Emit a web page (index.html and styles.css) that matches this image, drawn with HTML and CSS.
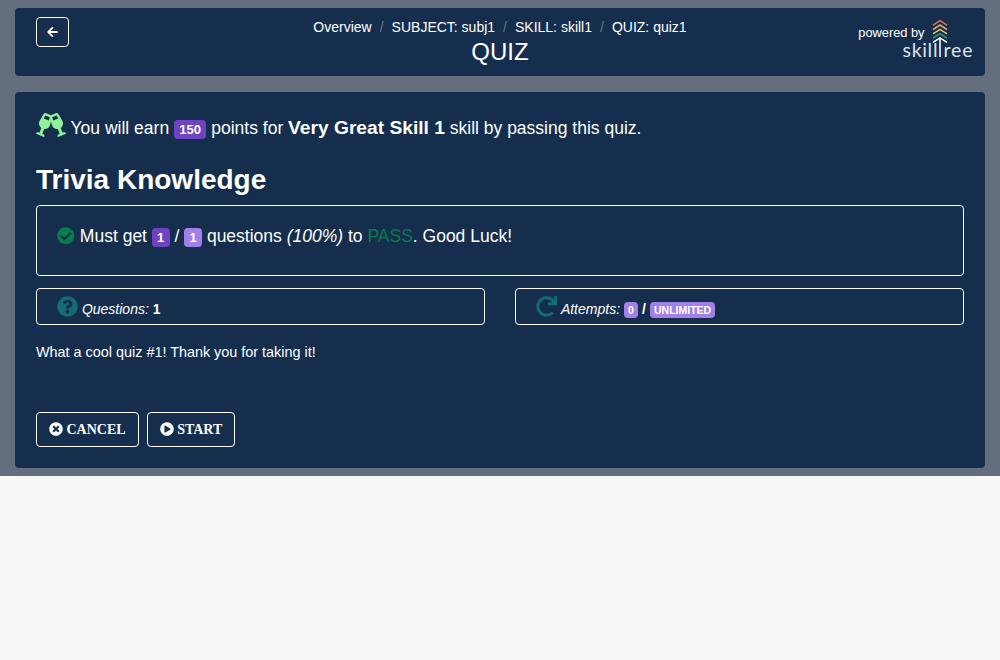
FILE: index.html
```html
<!DOCTYPE html>
<html lang="en">
<head>
<meta charset="utf-8">
<title>Quiz</title>
<link rel="stylesheet" href="styles.css">
</head>
<body>
<div class="page">
  <header class="card header">
    <div class="side">
      <button class="btn back" aria-label="Back"><svg width="11" height="12" viewBox="0 0 448 512"><path d="M257.500 445.100l-22.200 22.200c-9.400 9.400-24.600 9.400-33.900 0L7 273c-9.400-9.400-9.400-24.600 0-33.900L201.400 44.700c9.400-9.400 24.600-9.400 33.900 0l22.200 22.200c9.500 9.500 9.300 25-.4 34.300L136.600 216H424c13.300 0 24 10.700 24 24v32c0 13.300-10.700 24-24 24H136.600l120.500 114.800c9.800 9.300 10 24.800.4 34.300z"/></svg></button>
    </div>
    <div class="center">
      <nav class="crumbs"><a>Overview</a><i>/</i><a>SUBJECT: subj1</a><i>/</i><a>SKILL: skill1</a><i>/</i><a>QUIZ: quiz1</a></nav>
      <h1 class="title">QUIZ</h1>
    </div>
    <div class="side brand">
      <span class="powered">powered by</span>
      <svg class="logo" width="72" height="42" viewBox="0 0 72 42">
        <g fill="none" stroke-width="1.5">
          <path stroke="#e07256" d="M31 7.200l7-4.500 7 4.500"/>
          <path stroke="#eda05f" d="M31 11.500l7-4.500 7 4.500"/>
          <path stroke="#e5c15e" d="M31 15.800l7-4.500 7 4.500"/>
          <path stroke="#2a9d8c" d="M31 20.100l7-4.500 7 4.500"/>
          <path stroke="#fff" d="M31 24.400l7-4.500 7 4.500M38 20v19"/>
        </g>
        <text class="logo-text" x="0.500" y="39" textLength="35">skill</text>
        <text class="logo-text" x="41.500" y="39" textLength="29">ree</text>
      </svg>
    </div>
  </header>

  <main class="card main">
    <p class="earn"><svg class="cheers" width="30" height="24" viewBox="0 0 640 512"><path d="M639.400 433.600c-8.400-20.400-31.800-30.100-52.200-21.600l-22.100 9.200-38.700-101.900c47.900-35 64.800-100.300 34.500-152.800L474.300 16c-8-13.900-25.100-19.700-40-13.600L320 49.800 205.700 2.400c-14.900-6.200-32-.3-40 13.600L79.100 166.500C48.900 219 65.700 284.300 113.600 319.200L74.900 421.100l-22.100-9.200c-20.400-8.500-43.700 1.200-52.200 21.600-1.700 4.100.2 8.800 4.300 10.500l162.300 67.400c4.100 1.700 8.700-.2 10.400-4.300 8.400-20.400-1.200-43.800-21.600-52.300l-22.100-9.200L173.300 342c4.400.5 8.800 1.300 13.100 1.300 51.700 0 99.400-33.100 113.400-85.300l20.200-75.400 20.200 75.400c14 52.200 61.700 85.300 113.400 85.300 4.300 0 8.700-.8 13.100-1.300L506 445.600l-22.100 9.200c-20.400 8.500-30 31.900-21.600 52.300 1.700 4.100 6.400 6 10.400 4.300L635.100 444c4-1.700 6-6.300 4.300-10.400zM275.900 162.100l-112.100-46.500 36.500-63.400 94.500 39.200-18.900 70.700zm88.200 0l-18.900-70.700 94.500-39.200 36.500 63.400-112.100 46.500z"/></svg>
      You will earn <span class="badge dark">150</span> points for <b>Very Great Skill 1</b> skill by passing this quiz.</p>
    <h2 class="name">Trivia Knowledge</h2>
    <section class="box goal"><svg class="check" width="17.500" height="17.500" viewBox="0 0 512 512"><path d="M504 256c0 136.967-111.033 248-248 248S8 392.967 8 256 119.033 8 256 8s248 111.033 248 248zM227.314 387.314l184-184c6.248-6.248 6.248-16.379 0-22.627l-22.627-22.627c-6.248-6.249-16.379-6.249-22.628 0L216 308.118l-70.059-70.059c-6.248-6.248-16.379-6.248-22.628 0l-22.627 22.627c-6.248 6.248-6.248 16.379 0 22.627l104 104c6.249 6.249 16.379 6.249 22.628.001z"/></svg>
      Must get <span class="badge dark">1</span> / <span class="badge light">1</span> questions <em>(100%)</em> to <span class="pass">PASS</span>. Good Luck!</section>
    <div class="stats">
      <section class="box stat"><svg class="stat-icon" width="21" height="21" viewBox="0 0 512 512"><path d="M504 256c0 136.997-111.043 248-248 248S8 392.997 8 256C8 119.083 119.043 8 256 8s248 111.083 248 248zM262.655 90c-54.497 0-89.255 22.957-116.549 63.758-3.536 5.286-2.353 12.415 2.715 16.258l34.699 26.310c5.205 3.947 12.621 3.008 16.665-2.122 17.864-22.658 30.113-35.797 57.303-35.797 20.429 0 45.698 13.148 45.698 32.958 0 14.976-12.363 22.667-32.534 33.976C247.128 238.528 216 254.941 216 296v4c0 6.627 5.373 12 12 12h56c6.627 0 12-5.373 12-12v-1.333c0-28.462 83.186-29.647 83.186-106.667 0-58.002-60.165-102-116.531-102zM256 338c-25.365 0-46 20.635-46 46 0 25.364 20.635 46 46 46s46-20.636 46-46c0-25.365-20.635-46-46-46z"/></svg>
        <em>Questions:</em> <b>1</b></section>
      <section class="box stat"><svg class="stat-icon" width="21" height="21" viewBox="0 0 512 512"><path d="M500.330 0h-47.410a12 12 0 0 0-12 12.570l4 82.760A247.420 247.420 0 0 0 256 8C119.340 8 7.900 119.530 8 256.190 8.100 393.070 119.100 504 256 504a247.100 247.100 0 0 0 166.180-63.910 12 12 0 0 0 .48-17.430l-34-34a12 12 0 0 0-16.380-.55A176 176 0 1 1 402.100 157.800l-101.530-4.870a12 12 0 0 0-12.570 12v47.410a12 12 0 0 0 12 12h200.330a12 12 0 0 0 12-12V12a12 12 0 0 0-12-12z"/></svg>
        <em>Attempts:</em> <b><span class="badge light small">0</span> / <span class="badge light small">UNLIMITED</span></b></section>
    </div>
    <p class="desc">What a cool quiz #1! Thank you for taking it!</p>
    <div class="actions">
      <button class="btn action"><svg width="14" height="14" viewBox="0 0 512 512"><path d="M256 8C119 8 8 119 8 256s111 248 248 248 248-111 248-248S393 8 256 8zm121.600 313.100c4.700 4.700 4.700 12.300 0 17L338 377.600c-4.700 4.700-12.300 4.700-17 0L256 312l-65.100 65.600c-4.700 4.700-12.300 4.700-17 0L134.400 338c-4.700-4.700-4.700-12.300 0-17l65.600-65-65.600-65.100c-4.700-4.700-4.700-12.300 0-17l39.600-39.600c4.700-4.700 12.300-4.700 17 0l65 65.700 65.100-65.600c4.700-4.700 12.300-4.700 17 0l39.600 39.600c4.700 4.700 4.700 12.300 0 17L312 256l65.600 65.100z"/></svg><span>CANCEL</span></button>
      <button class="btn action"><svg width="14" height="14" viewBox="0 0 512 512"><path d="M256 8C119 8 8 119 8 256s111 248 248 248 248-111 248-248S393 8 256 8zm115.700 272l-176 101c-15.800 8.800-35.700-2.500-35.700-21V152c0-18.400 19.800-29.800 35.700-21l176 107c16.400 9.200 16.400 32.900 0 42z"/></svg><span>START</span></button>
    </div>
  </main>
</div>
</body>
</html>
```
FILE: styles.css
```css
* { box-sizing: border-box; }
body { margin: 0; background: #f7f7f7; color: #fff; font: 14.4px/21.6px "Liberation Sans", Arial, sans-serif; }
svg { fill: currentColor; }
.page { height: 476px; padding: 8px 15px; background: #646d7d; display: flex; flex-direction: column; gap: 16px; }
.card { background: #152e4d; border-radius: 4px; }
.header { height: 68px; display: grid; grid-template-columns: 1fr auto 1fr; padding: 9px 11px 0 21px; }
.center { text-align: center; padding-right: 10px; }
.crumbs { display: flex; font-size: 14px; line-height: 20px; }
.crumbs i { font-style: normal; color: #6c757d; padding: 0 8px; }
.title { margin: 0; font-size: 24px; line-height: 30px; font-weight: 400; }
.btn { background: transparent; border: 1px solid #fff; border-radius: 4px; color: #fff; padding: 0; display: flex; align-items: center; justify-content: center; }
.back { width: 33px; height: 30px; }
.brand { display: flex; justify-content: flex-end; align-items: flex-start; }
.powered { font-size: 12.800px; line-height: 20px; padding-top: 6px; margin-right: -22.500px; }
.logo { margin-top: 1px; }
.logo-text { font: 400 19.500px Lato, sans-serif; fill: #dde2e8; }
.main { height: 376px; padding: 19px 21px 21px; display: flex; flex-direction: column; }
.earn { margin: 0; font-size: 17.500px; line-height: 34px; height: 52px; }
.earn b { font-size: 19.200px; }
.cheers { fill: #90f297; vertical-align: -3px; }
.badge { display: inline-block; font-size: 13.125px; font-weight: 700; line-height: 13.125px; padding: 3.280px 5.250px; border-radius: 4px; }
.dark { background: #6f42c1; }
.light { background: #a37fe8; }
.small { font-size: 10.500px; line-height: 10.500px; padding: 2.600px 4.200px; }
.name { margin: 0; font-size: 28px; line-height: 34px; height: 42px; }
.box { border: 1px solid #fff; border-radius: 4px; }
.goal { height: 71px; padding: 17px 20px; font-size: 17.500px; line-height: 26px; }
.check { color: #047f49; vertical-align: -2px; margin-right: 0.500px; }
.pass { color: #047f49; }
.stats { display: grid; grid-template-columns: 1fr 1fr; gap: 30px; margin-top: 12px; }
.stat { height: 37px; padding: 6px 20px 0; font-size: 14px; line-height: 28px; }
.stat-icon { color: #146c75; vertical-align: -3px; }
.desc { margin: 17px 0 0; }
.actions { display: flex; gap: 8px; margin-top: auto; }
.action { height: 35px; padding: 0 12px; gap: 3.500px; font: 700 14px/20px "Liberation Serif", serif; }
.action svg { margin-bottom: 1px; }
```
